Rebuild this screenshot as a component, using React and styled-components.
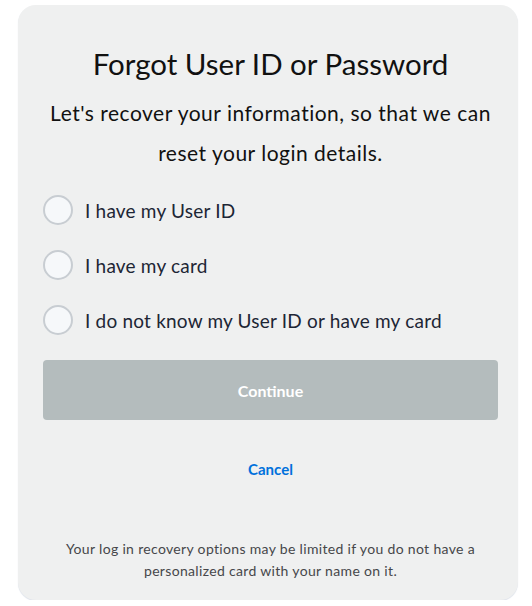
import React from 'react'
import styled, {createGlobalStyle} from 'styled-components'

const GlobalStyle = createGlobalStyle`
  body {
    margin: 0;
    background: #ffffff;
    font-family: Lato, "Open Sans", sans-serif;
  }
`

const Card = styled.div`
  box-sizing: border-box;
  width: 500px;
  margin: 5px 0 0 18px;
  padding: 41px 20px 18px 25px;
  background-color: #eff0f0;
  border-radius: 18px;
  box-shadow: 0 1px 1px #dde2ea;
  display: flex;
  flex-direction: column;
`

const Title = styled.h1`
  margin: 0;
  font-size: 29.5px;
  line-height: 36px;
  font-weight: 400;
  color: #111111;
  text-align: center;
`

const Subtitle = styled.p`
  margin: 11px 0 0;
  font-size: 21px;
  letter-spacing: 0.5px;
  line-height: 40px;
  color: #111111;
  text-align: center;
`

const Options = styled.div`
  margin-top: 22px;
  display: flex;
  flex-direction: column;
  gap: 25px;
`

const Option = styled.label`
  display: flex;
  align-items: center;
  gap: 12px;
  height: 30px;
  font-size: 19px;
  letter-spacing: 0.2px;
  color: #1d2635;
  cursor: pointer;
`

const Radio = styled.span`
  box-sizing: border-box;
  width: 30px;
  height: 30px;
  border-radius: 50%;
  border: 2px solid #c8cdd2;
  background: #f6f8fa;
  flex-shrink: 0;
`

const ContinueButton = styled.button`
  margin-top: 25px;
  height: 60px;
  width: 100%;
  border: none;
  border-radius: 4px;
  background-color: #b4bcbd;
  color: #ffffff;
  font-family: inherit;
  font-size: 16px;
  font-weight: 700;
`

const CancelLink = styled.a`
  margin-top: 39px;
  align-self: center;
  font-size: 15px;
  line-height: 20px;
  font-weight: 700;
  color: #0071dc;
  text-decoration: none;
`

const Note = styled.p`
  margin: 59px 0 0;
  font-size: 14px;
  letter-spacing: 0.33px;
  line-height: 22px;
  color: #46474a;
  text-align: center;
`

const options = [
    'I have my User ID',
    'I have my card',
    'I do not know my User ID or have my card',
]

const App = () => {
    return (
        <>
            <GlobalStyle/>
            <Card>
                <Title>Forgot User ID or Password</Title>
                <Subtitle>Let's recover your information, so that we can<br/>reset your login details.</Subtitle>
                <Options>
                    {options.map(o => (
                        <Option key={o}>
                            <Radio/>
                            {o}
                        </Option>
                    ))}
                </Options>
                <ContinueButton>Continue</ContinueButton>
                <CancelLink href="#">Cancel</CancelLink>
                <Note>Your log in recovery options may be limited if you do not have a<br/>personalized card with your name on it.</Note>
            </Card>
        </>
    )
}

export default App
